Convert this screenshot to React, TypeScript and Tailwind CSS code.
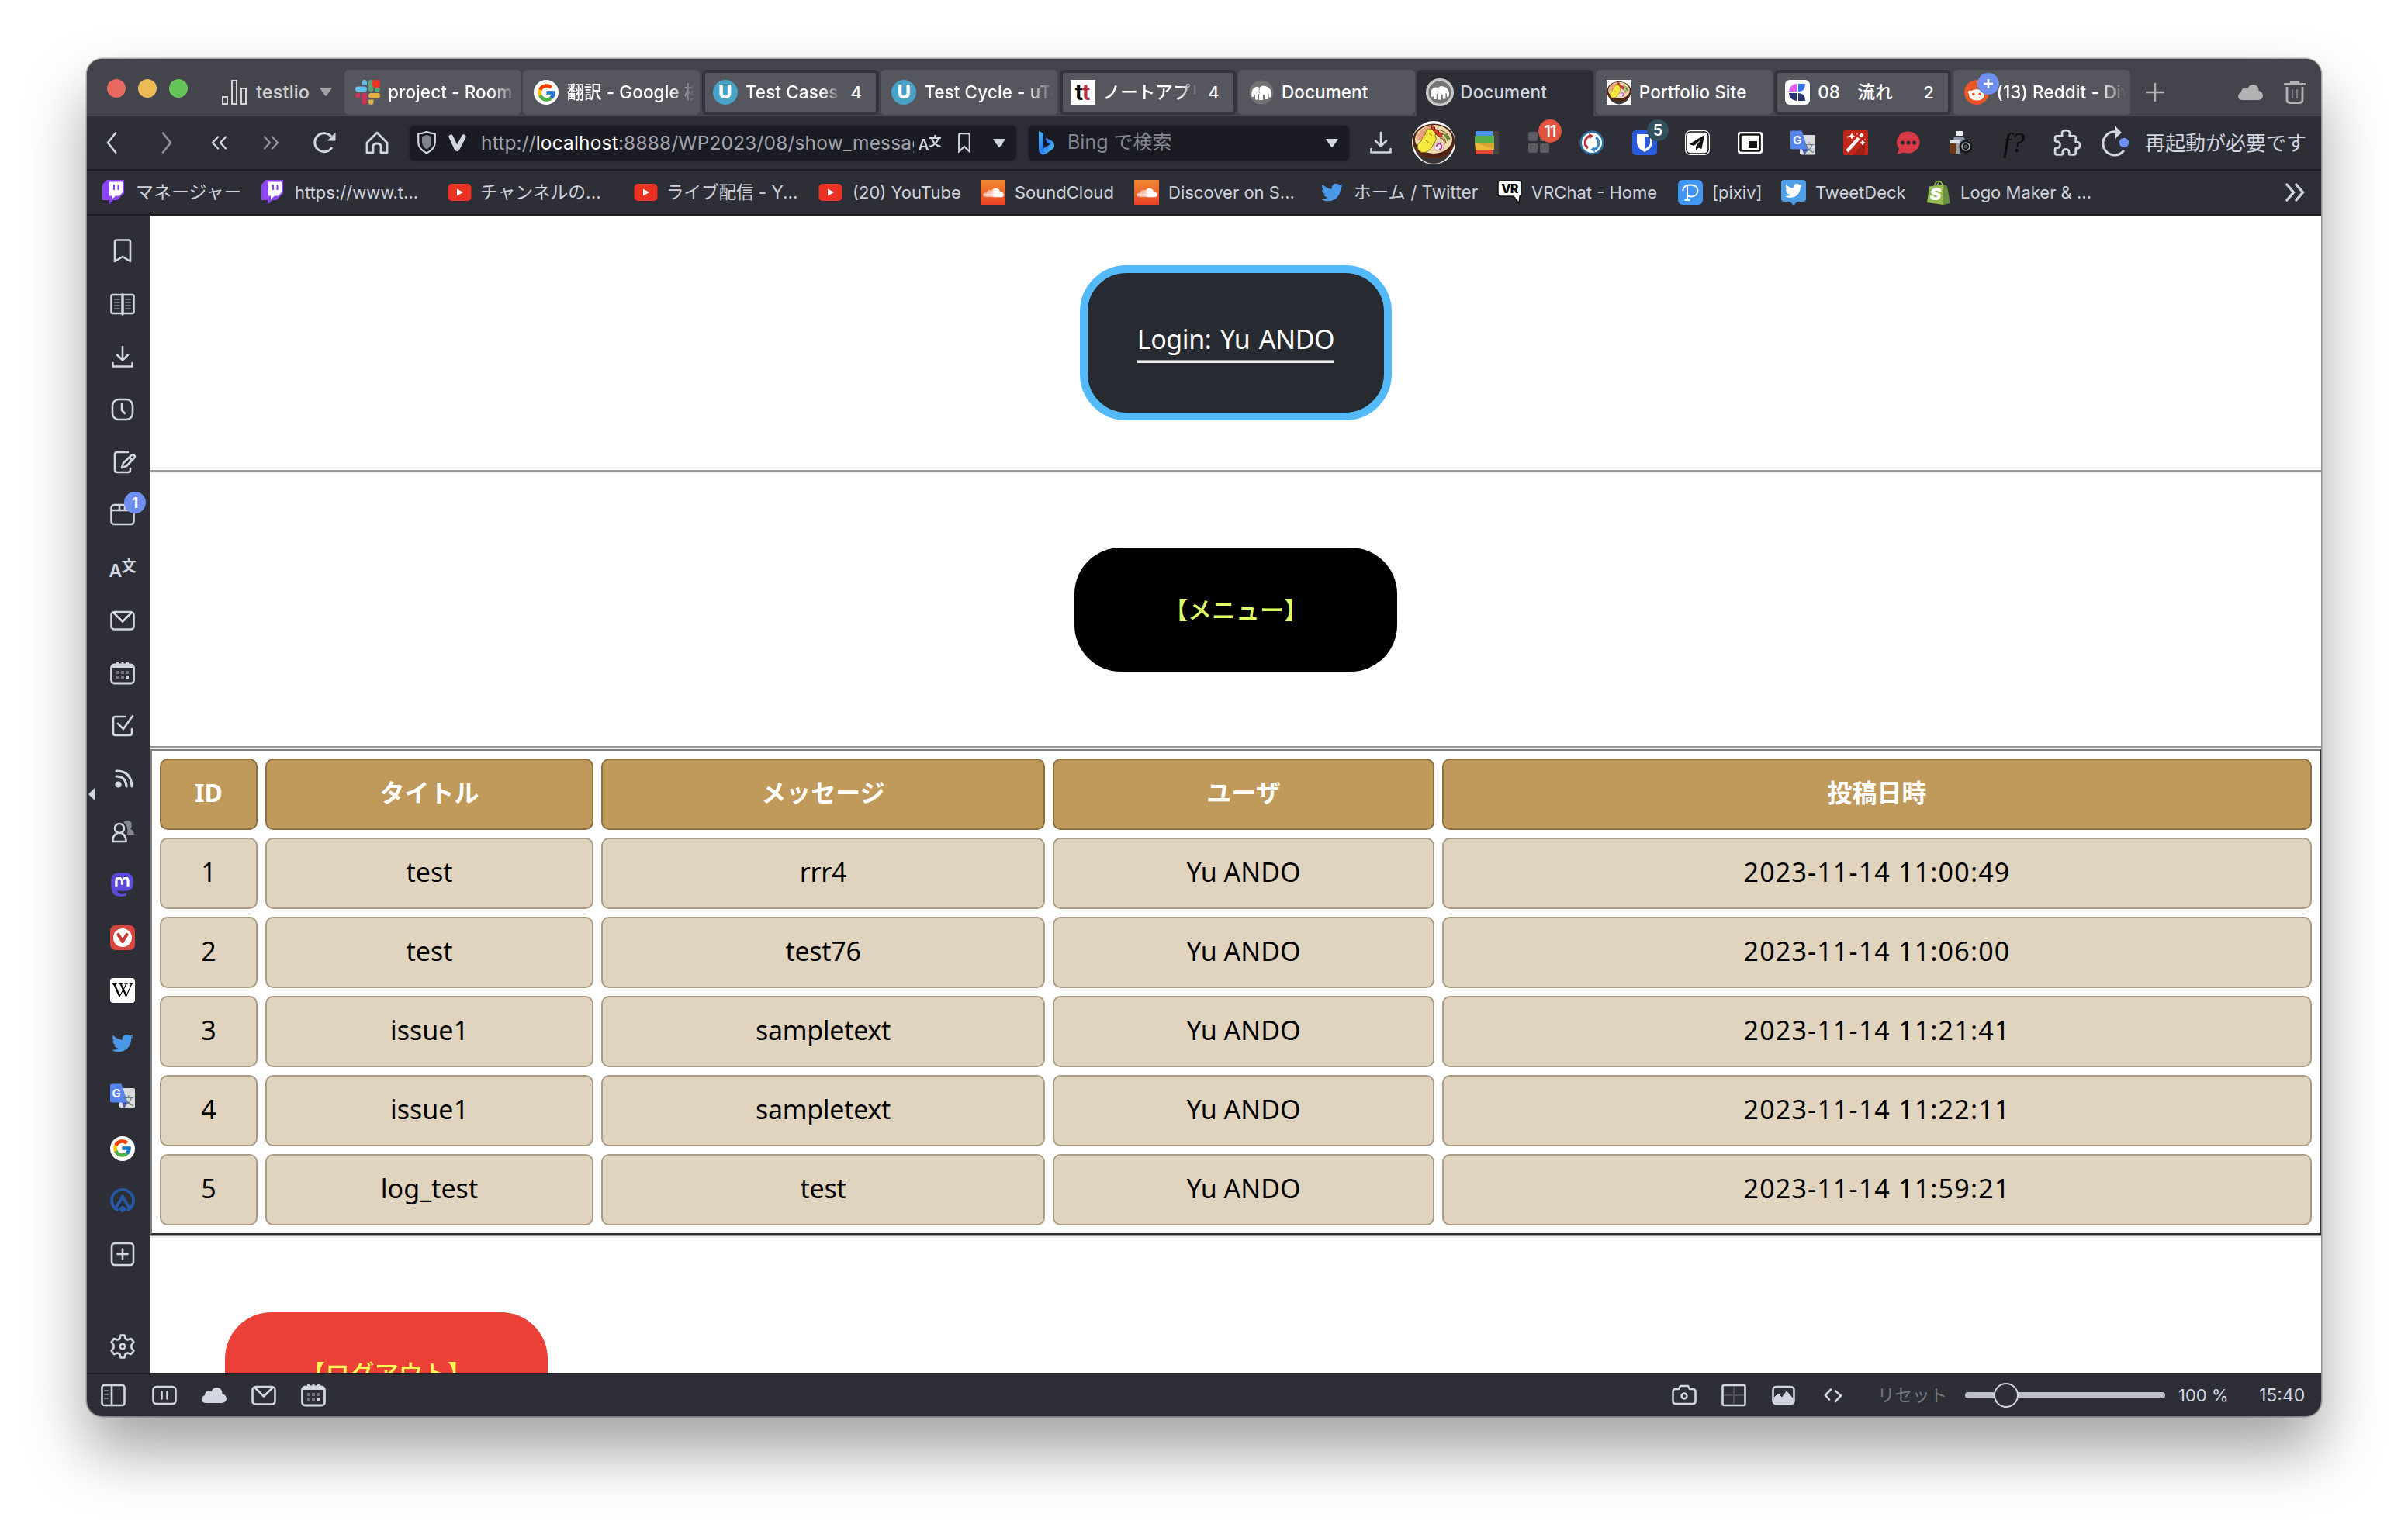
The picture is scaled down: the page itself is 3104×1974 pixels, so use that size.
import React from "react";
import { FaTwitter, FaSoundcloud, FaMastodon, FaRedditAlien, FaWikipediaW } from "react-icons/fa";
import { FcGoogle } from "react-icons/fc";

type P = { children?: React.ReactNode; className?: string };

/* ---------- shared drawing helpers ---------- */

function Line({ children, className = "size-8", w = 2.6 }: P & { w?: number }) {
  return (
    <svg viewBox="0 0 32 32" className={className + " shrink-0 overflow-visible"} fill="none" stroke="currentColor" strokeWidth={w} strokeLinejoin="round" strokeLinecap="round">
      {children}
    </svg>
  );
}

const Caret = ({ className = "w-4 h-[11px]" }: P) => (
  <svg viewBox="0 0 16 11" className={className + " shrink-0"} fill="currentColor">
    <path d="M1 0h14q1 0 .6 1L9 10.200q-1 1.200-2 0L.4 1Q0 0 1 0z" />
  </svg>
);

const Translate = () => (
  <span className="flex h-8 w-8 shrink-0 items-center justify-center">
    <span className="mt-2 w-4 text-[23px] leading-none font-semibold">A</span>
    <span className="mb-2 w-[18px] text-[19px] leading-none font-bold font-['Noto_Sans_CJK_JP']">文</span>
  </span>
);

const GoogleG = () => (
  <span className="flex size-8 shrink-0 items-center justify-center rounded-full bg-white">
    <FcGoogle className="size-[27px]" />
  </span>
);

const Slack = () => (
  <svg viewBox="0 0 32 32" className="size-8 shrink-0">
    <g fill="#5fc0ea"><rect x="0" y="8.500" width="15" height="6.500" rx="3.200" /><path d="M8.500 6.500V3.200A3.200 3.200 0 1 1 15 3.200v3.300z" /></g>
    <g fill="#54a878"><rect x="17" y="0" width="6.500" height="15" rx="3.200" /><path d="M25.500 15V11h6.500a3.300 3.300 0 0 1-3.300 4z" /></g>
    <g fill="#cf3259"><rect x="8.500" y="17" width="6.500" height="15" rx="3.200" /><path d="M6.500 17v3.300A3.200 3.200 0 1 1 3.200 17z" /></g>
    <g fill="#e3b045"><rect x="17" y="17" width="15" height="6.500" rx="3.200" /><path d="M17 25.500h6.500v3.300a3.200 3.200 0 1 1-6.500 0z" /></g>
    <circle cx="27" cy="5" r="5.600" fill="#eb3323" />
  </svg>
);

const UTest = () => (
  <span className="flex size-8 shrink-0 items-center justify-center rounded-full bg-[#48a2c8] text-[24px] font-extrabold leading-none text-white">U</span>
);

const TT = () => (
  <span className="flex size-8 shrink-0 items-center justify-center bg-white text-[28px] leading-none font-bold text-black">
    <span>t</span><span className="-ml-px text-[#b5303c]">t</span>
  </span>
);

const Mamp = ({ className = "size-8" }: P) => (
  <svg viewBox="0 0 32 32" className={className + " shrink-0"}>
    <circle cx="16" cy="16" r="15.500" fill="#737374" />
    <path d="M3.500 22C2.500 15 5 9.500 9.500 9q2.500-.3 4 1.200Q16 6.500 21 8q6 1.500 7.500 7 .6 4-.5 7.500h-2.500V18l-1.500-1v8h-4v-6h-2v7h-5v-8h-1.500v7.500H8V17l-1 5z" fill="#fff" />
    <path d="M13.500 10.500q-1.500 4 .5 7" fill="none" stroke="#9a9a9b" strokeWidth="1" />
  </svg>
);

const MampActive = () => (
  <span className="-m-0.5 flex size-9 shrink-0 items-center justify-center rounded-full bg-[#c9c9c9]"><Mamp className="size-[30px]" /></span>
);

const Noodles = ({ className = "" }: P) => (
  <svg viewBox="0 0 56 56" className={className + " shrink-0"}>
    <circle cx="28" cy="28" r="28" fill="#fff" />
    <path d="M1.500 26C3 43 14 55 28 55s25-12 26.500-29z" fill="#3b3634" />
    <ellipse cx="28" cy="25" rx="27" ry="21.500" fill="#4b2213" />
    <ellipse cx="28" cy="23.500" rx="24" ry="18.500" fill="#efdcae" />
    <path d="M28 12c10-3 20 5 21 12M30 15c8-2 15 4 16 11M33 19c6-2 10 3 11 10M36 22c4-1 6 4 6 8" stroke="#7d5a2a" strokeWidth="1.100" fill="none" />
    <path d="M5 22C8 13 16 7 25 6l-5 12-12 8z" fill="#e8a17d" />
    <path d="M8 37q-3-7 4-11 1-6 5-8 1-8 8-8 8 1 5 9 3 4-1 9-3 8-10 12-8 2-11-3z" fill="#f3ea3c" stroke="#8f6b1c" strokeWidth="1" />
    <path d="M22 16l4 3M17 24l5 4" stroke="#a8791c" strokeWidth="1" fill="none" />
    <path d="M25 5l4 2 1 4 4 1 1 3 5 1-3 5-5-3-3-4-3-3z" fill="#d0432c" stroke="#7c1f12" strokeWidth="1" />
    <path d="M42 16q6 2 7 8l-5-1z" fill="#5f8f3b" />
    <circle cx="35" cy="33" r="6" fill="#fff" stroke="#b9a" strokeWidth=".8" />
    <path d="M31.500 33a3.500 3.500 0 1 1 3.500 3.500" stroke="#d63a8c" strokeWidth="2" fill="none" />
    <path d="M2 27C4 41 15 47 28 47s24-6 26-20" stroke="#5a2813" strokeWidth="2.600" fill="none" />
  </svg>
);

const KIcon = () => (
  <svg viewBox="0 0 32 32" className="size-8 shrink-0">
    <rect width="32" height="32" rx="6" fill="#fff" />
    <path d="M15 5v10H5A10 10 0 0 1 15 5z" fill="#e25bf0" />
    <path d="M17 15V5h9q0 10-9 10z" fill="#2f6ff0" />
    <path d="M5 17h10v10A10 10 0 0 1 5 17zM17 17q9 0 9 10h-9z" fill="#26346f" />
  </svg>
);

const Reddit = () => (
  <span className="relative flex size-8 shrink-0 items-center justify-center rounded-full bg-[#ea5528]">
    <FaRedditAlien className="size-6 text-white" />
    <span className="absolute -top-[9px] left-[17px] flex size-7 items-center justify-center rounded-full bg-[#6f90f0]">
      <svg viewBox="0 0 12 12" className="size-3 stroke-white" strokeWidth="2.600"><path d="M6 0v12M0 6h12" /></svg>
    </span>
  </span>
);

const Twitch = () => (
  <svg viewBox="0 0 28 32" className="h-8 w-7 shrink-0">
    <path d="M5.500 0H28v17L19 26h-5l-6 6v-6H0V6z" fill="#8b45f5" />
    <path d="M9 2.500h17v13.500L22 20.500h-5L12 25v-4.500H9z" fill="#fff" />
    <path d="M14 6h2v7h-2zM19.500 6h2v7h-2z" fill="#8b45f5" />
  </svg>
);

const YouTube = () => (
  <svg viewBox="0 0 32 32" className="size-8 shrink-0">
    <rect x="0.500" y="5" width="30" height="22" rx="5" fill="#ea3323" />
    <path d="M12 11.500v9l8-4.500z" fill="#fff" />
  </svg>
);

const SoundCloudIcon = () => (
  <span className="flex size-8 shrink-0 items-center justify-center bg-linear-to-b from-[#ef8733] to-[#ea4025]">
    <FaSoundcloud className="size-[27px] text-white" />
  </span>
);

const VRChat = () => (
  <span className="relative flex h-8 w-8 shrink-0">
    <svg viewBox="0 0 32 32" className="absolute inset-0 size-8">
      <path d="M4 1h24q3 0 3 3v14q0 3-2 3l-1 9-7-9H4q-3 0-3-3V4q0-3 3-3z" fill="#fff" stroke="#111" strokeWidth="1.500" />
    </svg>
    <span className="relative w-full text-center text-[16px] font-extrabold leading-[23px] tracking-tighter text-black">VR</span>
  </span>
);

const Pixiv = () => (
  <svg viewBox="0 0 32 32" className="size-8 shrink-0">
    <rect width="32" height="32" rx="6" fill="#4196f2" />
    <path d="M6 14Q7 7 15 6.500q10-.5 10.500 7-.5 8-9 8-3 0-5-2M12 8v18M8.500 26h7" fill="none" stroke="#fff" strokeWidth="1.900" />
  </svg>
);

const TweetDeck = () => (
  <span className="relative flex h-7 w-8 shrink-0 -translate-y-0.5 items-center justify-center rounded-[4px] bg-[#4f9fe8]">
    <span className="absolute -bottom-[3px] left-3 size-2 rotate-45 bg-[#4f9fe8]" />
    <FaTwitter className="relative size-[22px] text-white" />
  </span>
);

const ShopBag = () => (
  <span className="relative flex h-8 w-8 shrink-0 justify-center">
    <svg viewBox="0 0 32 32" className="absolute inset-0 size-8">
      <path d="M10 9Q12 1 16 1.500T21 7M14 8q1-6 5-6" fill="none" stroke="#8fb550" strokeWidth="1.600" />
      <path d="M4 8.500 22 6v26L1 29z" fill="#97bd52" />
      <path d="M22 6l5 2 4 22-9 2z" fill="#6a8e3f" />
    </svg>
    <span className="relative -left-1 top-[7px] text-[22px] font-black italic leading-[23px] text-white">S</span>
  </span>
);

const GTranslate = () => (
  <span className="relative flex size-8 shrink-0">
    <svg viewBox="0 0 32 32" className="absolute inset-0 size-8">
      <rect x="12" y="6" width="20" height="25.500" rx="2" fill="#d9dadb" />
      <path d="M15 24h8l-5 8z" fill="#3a4bb5" />
      <path d="M2 .5h12.500l8 24H2q-2 0-2-2v-20q0-2 2-2z" fill="#5484ec" />
    </svg>
    <span className="absolute left-[3px] top-1 text-[15px] font-bold leading-[18px] text-white">G</span>
    <span className="absolute bottom-[3px] right-px text-[14px] leading-[16px] text-[#6b7c85] font-['Noto_Sans_CJK_JP']">文</span>
  </span>
);

const DownloadIcon = ({ className = "size-8" }: P) => (
  <Line className={className}><path d="M16 3v17M9 13.500l7 7 7-7M3.500 24v4.500h25V24" /></Line>
);

const MailIcon = () => (
  <Line><rect x="1.500" y="5" width="29" height="22.500" rx="4" /><path d="M5 6.500l11 11 11-11" /></Line>
);

const CalendarIcon = () => (
  <svg viewBox="0 0 32 32" className="size-8 shrink-0">
    <rect x="1.500" y="5" width="29" height="24" rx="4" fill="none" stroke="currentColor" strokeWidth="2.800" />
    <path d="M2 5h28v4H2zM8 2h3v4H8zM14.500 2h3v4h-3zM21 2h3v4h-3z" fill="currentColor" />
    <path d="M8 13h4v4H8zM14 13h4v4h-4zM20 13h4v4h-4zM8 19h4v4H8zM14 19h4v4h-4z" fill="#74767f" />
    <path d="M20 19h4v4h-4z" fill="currentColor" />
  </svg>
);

const CloudIcon = ({ className = "size-8" }: P) => (
  <svg viewBox="0 2 32 25" preserveAspectRatio="none" className={className + " shrink-0"} fill="currentColor">
    <path d="M6 27Q0 27 0 21q0-4 4-6.500Q4 8 9 7.500q2 0 3.500 1Q14 2 20 2q6.500 1 6.500 10 5.500 2 5.500 9Q31 26 26 27z" />
  </svg>
);

/* ---------- tab bar ---------- */

type TabData = { icon: React.ReactNode; label: string; count?: string; fade?: boolean; active?: boolean };
const tabs: TabData[] = [
  { icon: <Slack />, label: "project - Room", fade: true },
  { icon: <GoogleG />, label: "翻訳 - Google 検索", fade: true },
  { icon: <UTest />, label: "Test Cases", count: "4", fade: true },
  { icon: <UTest />, label: "Test Cycle - uTest", fade: true },
  { icon: <TT />, label: "ノートアプリ", count: "4", fade: true },
  { icon: <Mamp />, label: "Document" },
  { icon: <MampActive />, label: "Document", active: true },
  { icon: <span className="flex size-8 shrink-0 bg-white"><Noodles className="size-8" /></span>, label: "Portfolio Site" },
  { icon: <KIcon />, label: "08　流れ", count: "2" },
  { icon: <Reddit />, label: "(13) Reddit - Dive", fade: true },
];

function Tab({ t }: { t: TabData }) {
  const frame = t.active
    ? "h-[61px] rounded-t-[6px] bg-[#2e2e37] text-[#d2d6e0]"
    : t.count
      ? "h-[58px] rounded-[6px] border-[4px] border-[#34343d] bg-[#56565f] text-white pl-2.5 pr-[15px]"
      : "h-[58px] rounded-[6px] bg-[#56565f] text-white";
  return (
    <div className={"flex w-[228px] shrink-0 items-center gap-[10px] " + (t.count ? "" : "pl-3.5 pr-1.5 ") + (t.active ? "pb-[3px] " : "") + frame}>
      {t.icon}
      <span className={"min-w-0 flex-1 overflow-hidden whitespace-nowrap text-[22.5px] leading-8 font-medium tracking-[0.1px] " + (t.fade ? "mask-r-from-80% mask-r-to-100%" : "")}>{t.label}</span>
      {t.count && <span className="w-5 text-center text-[22px] font-medium">{t.count}</span>}
    </div>
  );
}

function TabBar() {
  return (
    <div className="flex h-[74px] shrink-0 bg-[#44444c]">
      <div className="flex h-[76px] w-[332px] shrink-0 items-center pl-[26px]">
        <span className="size-6 rounded-full bg-[#e8695f]" />
        <span className="ml-4 size-6 rounded-full bg-[#edbb55]" />
        <span className="ml-4 size-6 rounded-full bg-[#65c558]" />
        <svg viewBox="0 0 32 32" className="ml-[44px] mt-2.5 size-8 shrink-0" fill="none" stroke="#d4d4d6" strokeWidth="2">
          <path d="M1 22h6v9H1zM13 1h6v30h-6zM25 11h6v20h-6z" />
        </svg>
        <span className="ml-3 mt-2.5 w-[70px] text-[23.5px] font-medium tracking-[0.1px] text-[#d0d0d3]">testlio</span>
        <Caret className="ml-3 mt-2 h-[11px] w-4 text-[#a3a3a7]" />
      </div>
      <div className="mt-3.5 flex h-[60px] gap-[2.4px]">
        {tabs.map((t, i) => <Tab key={i} t={t} />)}
      </div>
      <div className="mt-3 flex flex-1 items-center text-[#b2b2b4]">
        <svg viewBox="0 0 24 24" className="ml-5 size-6" stroke="currentColor" strokeWidth="2.400"><path d="M12 0v24M0 12h24" /></svg>
        <CloudIcon className="ml-auto mr-[27px] h-5 w-8" />
        <svg viewBox="0 0 28 30" className="mr-5 h-[30px] w-7" fill="none" stroke="currentColor" strokeWidth="2.800">
          <path d="M1 4.500h26M9 2h10" strokeLinecap="round" /><path d="M4 8v17q0 3.500 3.500 3.500h13Q24 28.500 24 25V8" /><path d="M11 11v12M17 11v12" strokeWidth="2" opacity=".5" />
        </svg>
      </div>
    </div>
  );
}

/* ---------- address bar ---------- */

const Cell = ({ children, className = "" }: P) => (
  <div className={"relative flex w-[68px] shrink-0 items-center justify-center " + className}>{children}</div>
);

function Toolbar() {
  return (
    <div className="flex h-[68px] shrink-0 items-center text-[#d2d6e0]">
      <Cell><Line className="mr-1 size-8" w={2.6}><path d="M21 3.500L11 16l10 12.500" /></Line></Cell>
      <Cell className="text-[#8f929b]"><Line className="ml-0.5 size-8" w={2.6}><path d="M11 3.500L21 16 11 28.500" /></Line></Cell>
      <Cell><Line w={2.4}><path d="M15 8.500L8 16l7 7.500M25 8.500L18 16l7 7.500" /></Line></Cell>
      <Cell className="text-[#8f929b]"><Line w={2.4}><path d="M7 8.500L14 16l-7 7.500M17 8.500L24 16l-7 7.500" /></Line></Cell>
      <Cell><Line w={3}><path d="M26 22A12 12 0 1 1 25 8" strokeLinecap="butt" /><path d="M30 4v9h-9z" fill="currentColor" strokeWidth="1" /></Line></Cell>
      <Cell><Line w={2.8}><path d="M3 16L16 3l13 13v13h-8v-8q0-4-5-4t-5 4v8H3z" /></Line></Cell>

      <div className="ml-1.5 flex h-[49px] w-[786px] shrink-0 items-center rounded-lg border-2 border-[#282831] bg-[#1b1b23] text-[#a2a5ae]">
        <svg viewBox="0 0 24 30" className="ml-[10px] h-[30px] w-6 shrink-0"><path d="M1.200 3.500Q7 3 12 1q5 2 10.800 2.500V14q0 9-10.800 14.500Q1.200 23 1.200 14z" fill="none" stroke="#d2d6e0" strokeWidth="2.200" /><path d="M6 7l6-2 6 2v7q0 6-6 9.500Q6 20 6 14z" fill="#82858d" /></svg>
        <svg viewBox="0 0 24 24" className="ml-4 size-[23px] shrink-0 text-[#d2d6e0]"><path d="M3.500 3.500l7.500 16M20.500 3.500L12 20" stroke="currentColor" strokeWidth="6" strokeLinecap="round" /></svg>
        <div className="ml-[19px] w-[558px] overflow-hidden whitespace-nowrap text-[24.5px] tracking-[0.16px]">http://<span className="text-white">localhost</span>:8888/WP2023/08/show_messages.php</div>
        <div className="ml-1 flex scale-85 text-[#d2d6e0]"><Translate /></div>
        <svg viewBox="0 0 16 26" className="ml-[21px] h-[26px] w-4 shrink-0" fill="none" stroke="#d2d6e0" strokeWidth="2.200"><path d="M1.200 24.500V3q0-1.800 1.800-1.800h10q1.800 0 1.800 1.800v21.500L8 18z" /></svg>
        <Caret className="ml-[29px] h-[11px] w-4 text-[#d2d6e0]" />
      </div>

      <div className="ml-3 flex h-[49px] w-[417px] shrink-0 items-center rounded-lg border-2 border-[#282831] bg-[#1b1b23] text-[#84868f]">
        <svg viewBox="0 0 22 32" className="ml-3 h-8 w-[22px] shrink-0">
          <defs><linearGradient id="bing" x1="0" y1="0" x2="1" y2="1"><stop offset="0" stopColor="#4dbdf5" /><stop offset=".5" stopColor="#2f78f0" /><stop offset="1" stopColor="#4fd6e8" /></linearGradient></defs>
          <path d="M1 1l6 3v19l9-5-4-2-2.500-6.500L17 13q4 2 4 6.500 0 3.500-3 5.500L9 31q-3 1-5-.5T1 26z" fill="url(#bing)" />
        </svg>
        <span className="ml-4 flex-1 text-[25px]">Bing で検索</span>
        <Caret className="mr-[14px] h-[11px] w-4 text-[#d2d6e0]" />
      </div>

      <div className="ml-[5px] flex h-full shrink-0">
        <Cell><DownloadIcon /></Cell>
        <Cell><Noodles className="size-14" /></Cell>
        <Cell>
          <svg viewBox="0 0 32 32" className="size-8"><path d="M14 1h16q2 0 2 2v26q0 2-2 2H14z" fill="#444446" /><path d="M2 1h22v8H2z" fill="#4a90ea" /><path d="M1 7h25v9H1z" fill="#5aae49" /><path d="M1 16h25v9H2z" fill="#eeb93c" /><path d="M2 25h22v6H2z" fill="#e24a35" /><path d="M2 16l24 9v-9z" fill="#d9a42f" /></svg>
        </Cell>
        <Cell>
          <svg viewBox="0 0 28 28" className="size-7" fill="#5b5d62"><rect width="12" height="12" rx="2" /><rect x="15" width="12" height="12" rx="2" /><rect y="15" width="12" height="12" rx="2" /><rect x="15" y="15" width="12" height="12" rx="2" /></svg>
          <span className="absolute left-[33px] top-1 flex size-[30px] items-center justify-center rounded-full bg-[#e1523f] text-[20px] font-semibold leading-none tracking-tighter text-white">11</span>
        </Cell>
        <Cell>
          <svg viewBox="0 0 32 32" className="size-8" fill="none"><circle cx="16" cy="16" r="15.500" fill="#2c6f9f" /><circle cx="16" cy="16" r="13" fill="#fff" /><path d="M14 7a9 9 0 0 0-3 16" stroke="#b5393b" strokeWidth="3.200" /><path d="M18 25a9 9 0 0 0 3-16" stroke="#3689c7" strokeWidth="3.200" /><path d="M12 4l6 3-5 4z" fill="#b5393b" /><path d="M20 28l-6-3 5-4z" fill="#3689c7" /></svg>
        </Cell>
        <Cell>
          <svg viewBox="0 0 32 32" className="size-8"><rect width="32" height="32" rx="5" fill="#2a5bdc" /><path d="M6 5h20v11q0 7-10 12Q6 23 6 16z" fill="#fff" /><path d="M16 8.500h7V16q0 4-7 8.500z" fill="#2a5bdc" /></svg>
          <span className="absolute left-[37px] top-1 flex size-7 items-center justify-center rounded-full bg-[#33505f] text-[20px] font-semibold leading-none text-white">5</span>
        </Cell>
        <Cell>
          <svg viewBox="0 0 32 32" className="size-8"><rect width="32" height="32" rx="7" fill="#fff" /><rect x="2" y="2" width="28" height="28" rx="5" fill="none" stroke="#111" strokeWidth="1.600" /><path d="M25 6L5.500 18l6 2 9-8-6.500 9v5l3.500-3.500 4 1.500z" fill="#111" /></svg>
        </Cell>
        <Cell>
          <svg viewBox="0 0 32 32" className="size-8"><rect y="2" width="32" height="28" rx="3" fill="#fff" /><rect x="3.500" y="5.500" width="25" height="21" rx="1.500" fill="none" stroke="#111" strokeWidth="2.600" /><path d="M14 14h11v9H14z" fill="#111" /></svg>
        </Cell>
        <Cell><GTranslate /></Cell>
        <Cell>
          <svg viewBox="0 0 32 32" className="size-8"><rect width="32" height="32" rx="2" fill="#c0271b" /><path d="M16 28l12-14v18H12z" fill="#a01f16" /><path d="M5 27L20 10" stroke="#fff" strokeWidth="4.200" /><path d="M22 8l3-3.500" stroke="#fff" strokeWidth="4.200" /><path d="M11 4l1 2.500 2.500 1L12 8.500 11 11l-1-2.500-2.500-1L10 6.500zM25 13l1 2 2 1-2 1-1 2-1-2-2-1 2-1zM18 3v3M6 7v3M28 11v2" fill="#fff" stroke="#fff" strokeWidth=".8" /></svg>
        </Cell>
        <Cell>
          <svg viewBox="0 0 32 32" className="size-8"><path d="M16 1.500a15 14 0 1 1-6 27L1.500 31 4 24A14 14 0 0 1 16 1.500z" fill="#da3a46" /><g fill="#2a2a33"><circle cx="8.500" cy="16" r="2.600" /><circle cx="16" cy="16" r="2.600" /><circle cx="23.500" cy="16" r="2.600" /></g></svg>
        </Cell>
        <Cell>
          <svg viewBox="0 0 32 32" className="size-8"><path d="M9 1h9v6H9z" fill="#e9edf2" /><path d="M7 8h12l2 4h6v6H2v-6h4z" fill="#8f97ad" /><path d="M2 13h12v5H2z" fill="#dfe3ea" /><path d="M1 17h12v13H3q-2 0-2-2z" fill="#6b3a1c" /><path d="M10 17h5v13h-5z" fill="#9aa0aa" /><circle cx="22" cy="21" r="8.500" fill="#17181c" /><circle cx="22" cy="21" r="5" fill="none" stroke="#a8adb5" strokeWidth="1.600" /><circle cx="22" cy="21" r="2.500" fill="#4a4e55" /></svg>
        </Cell>
        <Cell><span className="font-['Liberation_Serif'] text-[36px] italic leading-none text-[#0b0b0e]">f?</span></Cell>
        <Cell>
          <Line className="size-[34px]" w={2.6}><path d="M2 10q0-2 2-2h6q1 0 .5-1.500Q9 1 15 1t4.500 5.500Q19 8 20 8h5q2 0 2 2v5q0 1 1 .500 4-.5 4 3.500t-4 4q-1-.5-1 .5v5q0 2-2 2h-5q-1.500 0-1-1.500.5-5-4-5t-4 5q0 1.500-1 1.500H4q-2 0-2-2v-5q0-1 1-1 5 0 5-4t-5-4q-1 0-1-1z" /></Line>
        </Cell>
      </div>
      <div className="ml-[9px] flex w-[58px] shrink-0 items-center">
        <svg viewBox="0 0 40 44" className="h-11 w-10" fill="none"><path d="M30 33A15 15 0 1 1 20 8" stroke="currentColor" strokeWidth="3.200" strokeLinecap="round" /><path d="M19 0l9 9-9 8z" fill="currentColor" /><circle cx="31" cy="22" r="6.200" fill="#6f90f0" /></svg>
      </div>
      <span className="-mt-1 whitespace-nowrap text-[26px] font-['Noto_Sans_CJK_JP']">再起動が必要です</span>
    </div>
  );
}

/* ---------- bookmarks ---------- */

function Bookmark({ icon, label, w, text = "ml-3 text-[22px]" }: { icon: React.ReactNode; label: string; w: string; text?: string }) {
  return (
    <div className={"flex shrink-0 items-center " + w}>
      <span className="flex w-8 shrink-0 justify-start">{icon}</span>
      <span className={"whitespace-nowrap leading-8 " + text}>{label}</span>
    </div>
  );
}

function Bookmarks() {
  return (
    <div className="flex h-[60px] shrink-0 items-center border-y-2 border-[#1c1c24] pl-5 text-[#ced2dc]">
      <Bookmark icon={<Twitch />} label="マネージャー" w="w-[205px]" text="ml-[11px] text-[23px]" />
      <Bookmark icon={<Twitch />} label="https://www.t..." w="w-[240px]" text="ml-[11px] text-[22px]" />
      <Bookmark icon={<YouTube />} label="チャンネルの..." w="w-[240px]" text="ml-[10px] text-[22.8px]" />
      <Bookmark icon={<YouTube />} label="ライブ配信 - Y..." w="w-[238px]" text="ml-[10px] text-[22.5px]" />
      <Bookmark icon={<YouTube />} label="(20) YouTube" w="w-[209px]" />
      <Bookmark icon={<SoundCloudIcon />} label="SoundCloud" w="w-[198px]" />
      <Bookmark icon={<SoundCloudIcon />} label="Discover on S..." w="w-[241px]" />
      <Bookmark icon={<FaTwitter className="size-7 text-[#4a99e9]" />} label="ホーム / Twitter" w="w-[227px]" text="ml-[10px] text-[22.5px]" />
      <Bookmark icon={<VRChat />} label="VRChat - Home" w="w-[233px]" />
      <Bookmark icon={<Pixiv />} label="[pixiv]" w="w-[133px]" />
      <Bookmark icon={<TweetDeck />} label="TweetDeck" w="w-[187px]" />
      <Bookmark icon={<ShopBag />} label="Logo Maker & ..." w="w-[240px]" />
      <Line className="ml-auto mr-[17px] size-8" w={3.4}><path d="M5 6l8.500 10L5 26M17 6l8.500 10L17 26" strokeLinejoin="miter" /></Line>
    </div>
  );
}

/* ---------- side panel ---------- */

const Side = ({ children, className = "" }: P) => (
  <div className={"relative flex h-[68.05px] shrink-0 items-center justify-center " + className}>{children}</div>
);

function Sidebar() {
  return (
    <div className="relative flex w-[82px] shrink-0 flex-col border-r border-[#26262e] pl-2.5 pt-3 text-[#d2d6e0]">
      <Side><Line><path d="M6 4q0-2.500 2.500-2.500h15Q26 1.500 26 4v25l-10-6-10 6z" /></Line></Side>
      <Side><Line><rect x="1.500" y="4" width="29" height="24" rx="2" /><path d="M16 4v25" strokeWidth="3.500" /><path d="M6 10h6M6 14h6M6 18h6M6 22h6M20 10h6M20 14h6M20 18h6M20 22h6" stroke="#75777f" strokeWidth="1.800" /></Line></Side>
      <Side><DownloadIcon /></Side>
      <Side><Line><rect x="3" y="3" width="26" height="26" rx="8" /><path d="M15 9v8l4 4" /></Line></Side>
      <Side><Line><path d="M23 3H9Q6 3 6 6v20q0 3 3 3h14q3 0 3-3v-2M15 23l2-6L28 6.500q1.500-1 3 .5t.5 3L21 21z" /><path d="M25 10l3 3" /></Line></Side>
      <Side>
        <Line><rect x="1.500" y="3" width="29" height="25" rx="4" /><path d="M2 10h28M12 4v6M19 4v6" /></Line>
        <span className="absolute left-[38px] top-1 flex h-7 w-7 items-center justify-center rounded-full bg-[#6f90f0] text-[19px] font-bold leading-none text-white">1</span>
      </Side>
      <Side><Translate /></Side>
      <Side><MailIcon /></Side>
      <Side><CalendarIcon /></Side>
      <Side><Line><path d="M19 4H7Q4 4 4 7v18q0 3 3 3h18q3 0 3-3v-5M10 13l7 7L29 3" /></Line></Side>
      <Side><Line className="ml-0.5 size-8" w={3.2}><path d="M7 6q19 0 20 20M7 13q12 0 13 13" /><circle cx="9.500" cy="23.500" r="2.500" fill="currentColor" /></Line></Side>
      <Side><Line><path d="M17 3q6-4 10 0 2 5-1 9 4 1 5 7h-9q2-11-5-16z" fill="#85878f" stroke="none" /><circle cx="12" cy="11" r="6" /><path d="M9.500 17Q3 20 3.500 28h17q0-8-6-11" /></Line></Side>
      <Side>
        <span className="relative flex size-8 items-center justify-center">
          <span className="absolute left-1.5 top-1.5 h-4 w-5 bg-white" />
          <FaMastodon className="relative size-[35px] shrink-0 text-[#5a4bdc]" />
        </span>
      </Side>
      <Side>
        <svg viewBox="0 0 32 32" className="size-8"><rect width="32" height="32" rx="7" fill="#d9453f" /><circle cx="16" cy="16" r="12" fill="#fff" /><path d="M10.500 12l5.500 9 5.500-9" fill="none" stroke="#c93a35" strokeWidth="4.200" strokeLinecap="round" strokeLinejoin="round" /></svg>
      </Side>
      <Side><span className="flex size-8 items-center justify-center rounded-[4px] bg-white text-black"><FaWikipediaW className="size-[28px]" /></span></Side>
      <Side><FaTwitter className="size-7 text-[#4a99e9]" /></Side>
      <Side><GTranslate /></Side>
      <Side><GoogleG /></Side>
      <Side><Line w={3.8} className="size-8 text-[#2459a5]"><path d="M9 27a14 14 0 1 1 14 0M7 25l9-15 9 15M13 26q3-4 6 0" strokeLinejoin="miter" /><circle cx="16" cy="27" r="3" fill="currentColor" strokeWidth="0" /></Line></Side>
      <Side><Line><rect x="2" y="2" width="28" height="28" rx="4" /><path d="M16 9.500v13M9.500 16h13" /></Line></Side>
      <div className="mt-auto flex h-[68px] items-center justify-center">
        <Line><path d="M13.500 1.500h5l1 4.500 3 1.500 4.500-1.500 3.500 4.500L27.500 14v4l3 3.500-3.500 4.500-4.500-1.500-3 1.500-1 4.500h-5l-1-4.500-3-1.500L5 26l-3.500-4.500 3-3.500v-4l-3-3.500L5 6l4.500 1.500 3-1.500z" /><circle cx="16" cy="16" r="3.200" /></Line>
      </div>
      <svg viewBox="0 0 8 16" className="absolute left-0.5 top-[738px] h-4 w-2" fill="currentColor"><path d="M8 0v16L0 8z" /></svg>
    </div>
  );
}

/* ---------- page ---------- */

const rows = [
  ["1", "test", "rrr4", "Yu ANDO", "2023-11-14 11:00:49"],
  ["2", "test", "test76", "Yu ANDO", "2023-11-14 11:06:00"],
  ["3", "issue1", "sampletext", "Yu ANDO", "2023-11-14 11:21:41"],
  ["4", "issue1", "sampletext", "Yu ANDO", "2023-11-14 11:22:11"],
  ["5", "log_test", "test", "Yu ANDO", "2023-11-14 11:59:21"],
];

const Rule = () => <div className="h-1 shrink-0 border-y-2 border-t-[#9a9a9a] border-b-[#eeeeee]" />;

function Page() {
  return (
    <main className="flex min-w-0 flex-1 flex-col overflow-hidden bg-white font-['Noto_Sans','Noto_Sans_CJK_JP',sans-serif] text-black">
      <div className="flex h-[328px] shrink-0 justify-center pt-16">
        <div className="flex h-[200px] w-[402px] flex-col items-center rounded-[60px] border-[10px] border-[#54b9f9] bg-[#282a31] pt-[60px] text-white">
          <span className="whitespace-nowrap text-[34px] leading-[50px] tracking-[-0.4px] [word-spacing:3px]">Login: Yu ANDO</span>
          <span className="mt-0.5 h-1 w-[254px] border-y-2 border-t-[#9a9a9a] border-b-[#eeeeee]" />
        </div>
      </div>
      <Rule />
      <div className="flex h-[352px] shrink-0 items-center justify-center">
        <div className="flex h-40 w-[416px] items-center justify-center rounded-[60px] bg-black pb-1 text-[31px] leading-none font-medium text-[#defe66] font-['Noto_Sans_CJK_JP']">【メニュー】</div>
      </div>
      <Rule />
      <div className="grid h-[626px] shrink-0 grid-cols-[126px_423px_572px_492px_1121px] gap-2.5 border-2 border-t-[#808080] border-r-[#2c2c2c] border-b-[#2c2c2c] border-l-[#808080] p-2.5">
        {["ID", "タイトル", "メッセージ", "ユーザ", "投稿日時"].map((h) => (
          <div key={h} className="flex h-[92px] items-center justify-center rounded-[10px] border-2 border-[#8d7144] bg-[#bf9a5b] pb-1 text-[32px] font-bold leading-none text-white">{h}</div>
        ))}
        {rows.flat().map((c, i) => (
          <div key={i} className={"flex h-[92px] items-center justify-center rounded-[10px] border-2 border-[#ab9c85] bg-[#e0d4be] pb-1 text-[34px] leading-none " + (i % 5 === 4 ? "tracking-[1.2px]" : i % 5 === 2 ? "tracking-[-0.3px]" : "")}>{c}</div>
        ))}
      </div>
      <Rule />
      <div className="mt-24 ml-24 flex h-40 w-[416px] shrink-0 items-center justify-center rounded-[60px] bg-[#ea4037] pb-1 text-[31.500px] leading-none font-medium text-[#fdf956] font-['Noto_Sans_CJK_JP']">【ログアウト】</div>
    </main>
  );
}

/* ---------- status bar ---------- */

function StatusBar() {
  return (
    <div className="flex h-14 shrink-0 items-center border-t-2 border-[#1c1c24] text-[22px] text-[#d2d6e0]">
      <div className="ml-[18px] flex gap-8">
        <Line className="mr-0.5 size-8"><rect x="1.500" y="3" width="29" height="26" rx="3" /><path d="M14 3v26" /><path d="M5 10h4M5 15h4M5 20h4" stroke="#75777f" strokeWidth="2" /></Line>
        <Line><rect x="1.500" y="5" width="29" height="22" rx="4" /><path d="M12.500 11.500v9M19.500 11.500v9" /></Line>
        <CloudIcon className="mt-1.5 h-5 w-8" />
        <MailIcon />
        <CalendarIcon />
      </div>
      <div className="ml-auto flex gap-8">
        <Line><path d="M5 8h4l2-4h10l2 4h4q3.500 0 3.500 3.500v12Q30.500 27 27 27H5q-3.500 0-3.500-3.500v-12Q1.500 8 5 8z" /><circle cx="16" cy="17" r="3.400" /></Line>
        <Line><rect x="1.500" y="3" width="29" height="26" rx="2" /><path d="M16 6v20M4 16h24" stroke="#4d505a" strokeWidth="2" /></Line>
        <Line><rect x="2.500" y="5" width="27" height="22" rx="4" /><path d="M4 25v-6l5-5 5 5 6-8 8 9v5z" fill="currentColor" strokeWidth="1" /></Line>
        <Line><path d="M13 8.500L6 16l5 5.500M19 10.500l7 6-7 7.500" strokeLinejoin="miter" /></Line>
      </div>
      <span className="ml-[41px] w-[113px] text-[22.5px] text-[#777a84]">リセット</span>
      <div className="relative h-2 w-[258px] rounded-full bg-[#bdc0cb]">
        <span className="absolute -top-3 left-[37px] size-8 rounded-full border-2 border-[#d2d6e0] bg-[#2e2e37]" />
      </div>
      <span className="ml-[17px] w-[104px] whitespace-nowrap">100 %</span>
      <span className="w-20 text-[23px]">15:40</span>
    </div>
  );
}

export default function App() {
  return (
    <div className="h-[1974px] w-[3104px] overflow-hidden bg-white px-28 pt-[76px] font-['Inter','Noto_Sans_CJK_JP',sans-serif]">
      <div className="h-[1750px] w-[2880px] rounded-[20px] shadow-[0_0_0_1.5px_rgba(0,0,0,0.3),0_44px_80px_rgba(0,0,0,0.37)]">
        <div className="flex h-full flex-col overflow-hidden rounded-[20px] bg-[#2e2e37]">
          <TabBar />
          <Toolbar />
          <Bookmarks />
          <div className="flex min-h-0 flex-1">
            <Sidebar />
            <Page />
          </div>
          <StatusBar />
        </div>
      </div>
    </div>
  );
}
